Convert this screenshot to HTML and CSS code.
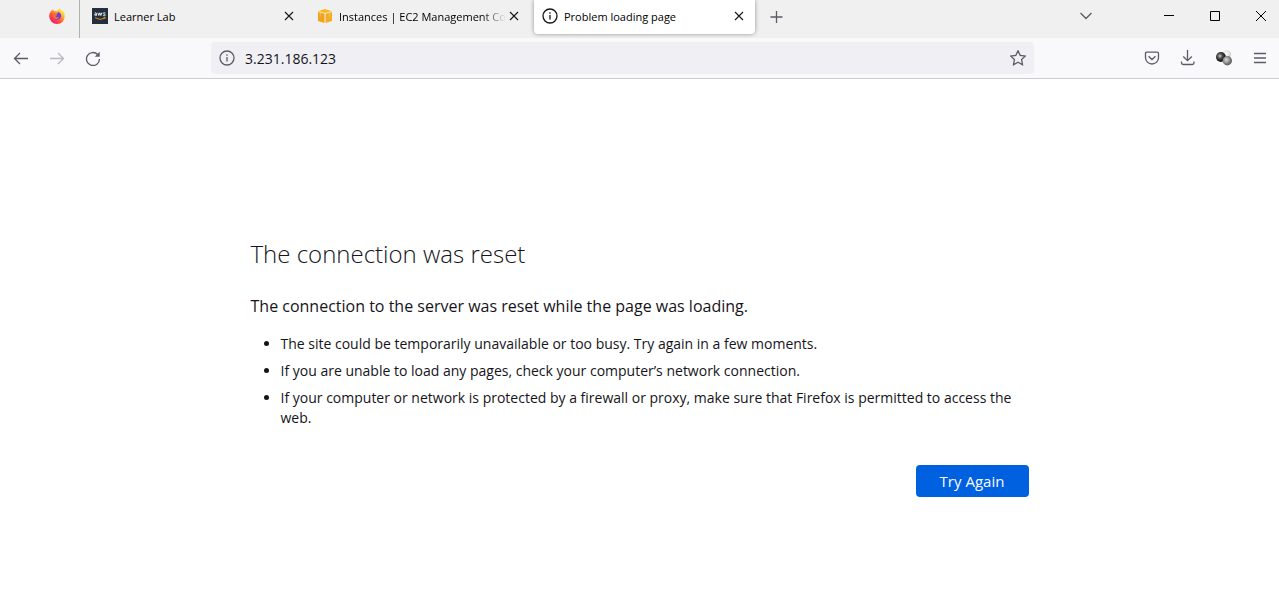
FILE: index.html
```html
<!DOCTYPE html>
<html lang="en">
<head>
<meta charset="utf-8">
<title>Problem loading page</title>
<link rel="stylesheet" href="styles.css">
</head>
<body>
<header class="browser">
  <div class="tabstrip">
    <button class="firefox-view" aria-label="Firefox View">
      <svg width="16" height="16" viewBox="0 0 16 16">
        <defs>
          <linearGradient id="flame" x1="0.85" y1="0.1" x2="0.2" y2="0.95"><stop offset="0" stop-color="#fff44f"/><stop offset="0.3" stop-color="#ffb02e"/><stop offset="0.6" stop-color="#ff5a36"/><stop offset="1" stop-color="#f0146e"/></linearGradient>
        </defs>
        <path d="M10.3.3c2 1 2.7 2.3 3 3.2.5 0 .6-.5.5-.9 1.300 1.500 2 3.300 2 5.500A7.800 7.800 0 0 1 .2 8.300C.2 5.900 1 4.300 1.900 3.200L2 2l1 1 .8-2 1.200 2h2c1 0 2.300-1 3.300-2.700z" fill="url(#flame)"/>
        <path d="M4.400 5.500 7.300 6l2.400-2c1.900.8 2.700 2.300 2.500 4.300-.3 2.300-2 3.500-4.100 3.500-2.400 0-4.300-1.800-4.300-4.100 0-.9.200-1.600.6-2.200z" fill="#7341d8"/>
        <path d="M3.500 5.200c1.400-.4 2.400 0 3 .9l1.900.3c-.2 1-1.200 1-1.900 1.600.3 1.300 2.400 1.700 3.700.7-.6 2-2.500 2.800-4.200 2.200C4.200 10.200 3.200 7.700 3.500 5.200z" fill="#ff6a30"/>
        <path d="M9.300 1.800c.4 2 3.400 3 3.700 6 .9-1.700.4-4.700-3.700-6z" fill="#ffd83d"/>
      </svg>
    </button>
    <nav class="tabs">
      <div class="tab">
        <svg class="tab-icon" width="16" height="16" viewBox="0 0 16 16"><rect width="16" height="16" fill="#232f3e"/><g fill="none" stroke="#e4e6e8" stroke-width="1"><path d="M2.700 5.100q1.800-.9 1.800.5V7.700M4.500 6.100q-2.200-.1-2 .9.400 1 2-.2M5.800 4.700l1 2.800 1-2.700 1 2.700 1-2.800M13.300 5q-2.200-.7-2.200.4c0 1 2.300.6 2.300 1.600 0 .9-1.500.8-2.500.4"/></g><path d="M3 9.600q5 3.300 9.700.7M11.500 9.500l1.800-.1-.5 1.600" fill="none" stroke="#d98e1c"/></svg>
        <a class="tab-title" href="#">Learner Lab</a>
        <button class="tab-close" aria-label="Close Learner Lab"><svg width="16" height="16" viewBox="0 0 16 16"><path d="M4 4l8 8M12 4l-8 8"/></svg></button>
      </div>
      <div class="tab">
        <svg class="tab-icon" width="16" height="16" viewBox="0 0 16 16"><path d="M1 3.300 7.800 1 15 3.300 8 5z" fill="#fbb817"/><path d="M1 4l6.500 1.700V15L1 12.900z" fill="#f0a31b"/><path d="M8.500 5.700 15 4v8.900L8.500 15z" fill="#f5ac24"/><path d="M3.500 3v1.500M12.300 3v1.500M3.200 4.700v4M12.800 4.700v4" stroke="#fbd277" stroke-width="0.700"/></svg>
        <a class="tab-title tab-title-faded" href="#">Instances | EC2 Management Co</a>
        <button class="tab-close" aria-label="Close Instances"><svg width="16" height="16" viewBox="0 0 16 16"><path d="M4 4l8 8M12 4l-8 8"/></svg></button>
      </div>
      <div class="tab tab-active">
        <svg class="tab-icon" width="16" height="16" viewBox="0 0 16 16"><circle cx="8" cy="8" r="7" fill="none" stroke="#15141a" stroke-width="1.300"/><path d="M8 7v4.500M8 4.300v1.400" stroke="#15141a" stroke-width="1.300"/></svg>
        <a class="tab-title" href="#" aria-current="page">Problem loading page</a>
        <button class="tab-close" aria-label="Close Problem loading page"><svg width="16" height="16" viewBox="0 0 16 16"><path d="M4 4l8 8M12 4l-8 8"/></svg></button>
      </div>
    </nav>
    <button class="new-tab" aria-label="New tab"><svg width="16" height="16" viewBox="0 0 16 16"><path d="M8.500 3v12M2.500 9h12"/></svg></button>
    <div class="window-controls">
      <button class="list-tabs" aria-label="List all tabs"><svg width="16" height="16" viewBox="0 0 16 16"><path d="M2.500 5 8 10.500 13.500 5"/></svg></button>
      <button class="window-button" aria-label="Minimize"><svg width="12" height="12" viewBox="0 0 12 12"><path d="M1 5.500h10"/></svg></button>
      <button class="window-button" aria-label="Maximize"><svg width="12" height="12" viewBox="0 0 12 12"><path d="M1.500 1.500h9v9h-9z"/></svg></button>
      <button class="window-button" aria-label="Close"><svg width="12" height="12" viewBox="0 0 12 12"><path d="M1 1l10 10M11 1 1 11"/></svg></button>
    </div>
  </div>
  <div class="toolbar">
    <div class="tool-group">
      <button class="tool" aria-label="Back"><svg width="16" height="16" viewBox="0 0 16 16"><path d="M15 8.500H1.500M7 3 1.500 8.500 7 14"/></svg></button>
      <button class="tool" aria-label="Forward" disabled><svg width="16" height="16" viewBox="0 0 16 16"><path d="M1 8.500h13.500M9 3 14.500 8.500 9 14"/></svg></button>
      <button class="tool" aria-label="Reload"><svg width="16" height="16" viewBox="0 0 16 16"><path d="M14.500 9A6.500 6.500 0 1 1 12.700 4.500"/><path d="M14.700 1.800v5H9.800z" class="solid"/></svg></button>
    </div>
    <div class="urlbar">
      <svg class="url-info" width="16" height="16" viewBox="0 0 16 16"><circle cx="8" cy="8" r="7"/><path d="M8 7v4.500M8 4.300v1.400"/></svg>
      <input class="url-input" type="text" value="3.231.186.123" aria-label="Address">
      <button class="bookmark" aria-label="Bookmark this page"><svg width="16" height="16" viewBox="0 0 16 16"><path d="M8 .8l2.200 4.600 5.100.7-3.700 3.500.9 5.100L8 12.300l-4.500 2.400.9-5.100L.7 6.100l5.100-.7z"/></svg></button>
    </div>
    <div class="tool-group">
      <button class="tool" aria-label="Save to Pocket"><svg width="16" height="16" viewBox="0 0 16 16"><path d="M2.800 2.200h10.400q1.300 0 1.300 1.300V7.500a6.500 6.500 0 0 1-13 0V3.500q0-1.300 1.300-1.300zM4.500 6.200 8 9.500l3.500-3.300"/></svg></button>
      <button class="tool" aria-label="Downloads"><svg width="16" height="16" viewBox="0 0 16 16"><path d="M7.500 0v10.500M3.200 6.500 7.500 10.700l4.300-4.200M1.500 11.500v1.300q0 1.700 1.700 1.700h9.100q1.700 0 1.700-1.700v-1.300"/></svg></button>
      <button class="tool" aria-label="Extension"><svg width="16" height="16" viewBox="0 0 16 16">
        <defs>
          <radialGradient id="dark" cx="0.4" cy="0.4"><stop offset="0" stop-color="#d0d0d0"/><stop offset="0.450" stop-color="#555555"/><stop offset="1" stop-color="#161616"/></radialGradient>
          <radialGradient id="grey" cx="0.4" cy="0.4"><stop offset="0" stop-color="#dddddd"/><stop offset="1" stop-color="#666666"/></radialGradient>
          <radialGradient id="pale" cx="0.4" cy="0.4"><stop offset="0" stop-color="#ffffff"/><stop offset="1" stop-color="#d4d4d4"/></radialGradient>
        </defs>
        <g class="spheres"><circle cx="11" cy="4.500" r="4.200" fill="url(#pale)"/><circle cx="4.900" cy="7" r="4.900" fill="url(#dark)"/><circle cx="11.300" cy="10.800" r="4.700" fill="url(#grey)"/></g>
      </svg></button>
      <button class="tool" aria-label="Open menu"><svg width="16" height="16" viewBox="0 0 16 16"><path d="M2 3.500h12M2 8h12M2 12.500h12"/></svg></button>
    </div>
  </div>
</header>
<main class="page">
  <h1 class="title">The connection was reset</h1>
  <p class="summary">The connection to the server was reset while the page was loading.</p>
  <ul class="hints">
    <li>The site could be temporarily unavailable or too busy. Try again in a few moments.</li>
    <li>If you are unable to load any pages, check your computer’s network connection.</li>
    <li>If your computer or network is protected by a firewall or proxy, make sure that Firefox is permitted to access the web.</li>
  </ul>
  <div class="actions"><button class="try-again">Try Again</button></div>
</main>
</body>
</html>
```
FILE: styles.css
```css
* { box-sizing: border-box; }

body {
  margin: 0;
  background: #ffffff;
  color: #15141a;
  font-family: "Open Sans", "Noto Sans", sans-serif;
}

button {
  display: flex;
  align-items: center;
  justify-content: center;
  padding: 0;
  border: 0;
  background: transparent;
  font-family: inherit;
}

button svg, .url-info {
  fill: none;
  stroke: #5b5b66;
  stroke-width: 1.3;
}

.tabstrip {
  display: flex;
  height: 38px;
  background: #f0f0f0;
}

.firefox-view {
  width: 80px;
  padding: 0 14px 6px 48px;
  border-right: 1px solid #b0b0b0;
}

.firefox-view svg { stroke: none; }

.tabs {
  display: flex;
  gap: 4px;
  padding-left: 4px;
}

.tab {
  display: flex;
  align-items: center;
  width: 221px;
  height: 34px;
  padding: 0 8px 2px;
  border-radius: 0 0 4px 4px;
}

.tab-active {
  background: #ffffff;
  box-shadow: 0 0 4px rgba(0, 0, 0, 0.4);
}

.tab-icon { flex: none; }

.tab-title {
  flex: 1;
  min-width: 0;
  margin-left: 6px;
  padding-top: 1px;
  overflow: hidden;
  color: #000000;
  font-size: 11px;
  line-height: 20px;
  text-decoration: none;
  white-space: nowrap;
}

.tab-title-faded { mask-image: linear-gradient(to left, transparent, #000000 24px); }

.tab-close svg {
  stroke: #15141a;
  stroke-width: 1.1;
}

.new-tab {
  width: 36px;
  height: 32px;
  margin-left: 3px;
}

.window-controls {
  display: flex;
  gap: 10px;
  height: 32px;
  margin-left: auto;
}

.list-tabs {
  width: 36px;
  margin-right: 37px;
}

.window-button { width: 36px; }

.window-button svg {
  stroke: #000000;
  stroke-width: 1;
}

.toolbar {
  display: flex;
  align-items: center;
  justify-content: space-between;
  gap: 100px;
  height: 41px;
  padding: 0 1px 0 3px;
  border-bottom: 1px solid #cccccf;
  background: #f9f9fb;
}

.tool-group { display: flex; }

.tool {
  width: 36px;
  height: 32px;
}

.tool:disabled { opacity: 0.4; }

.tool .solid {
  fill: #5b5b66;
  stroke: none;
}

.tool .spheres { stroke: none; }

.urlbar {
  display: flex;
  flex: 1;
  align-items: center;
  height: 32px;
  padding: 0 8px;
  border-radius: 4px;
  background: #f0f0f4;
}

.url-input {
  flex: 1;
  min-width: 0;
  margin: 0;
  padding: 0 10px;
  border: 0;
  outline: 0;
  background: transparent;
  color: #15141a;
  font-family: inherit;
  font-size: 14px;
}

.page {
  max-width: 778px;
  margin: 0 auto;
  padding-top: 155px;
}

.title {
  margin: 0;
  font-size: 24px;
  font-weight: 300;
  line-height: 40px;
}

.summary {
  margin: 20px 0 16px;
  font-size: 16px;
  line-height: 24px;
}

.hints {
  margin: 0;
  padding-left: 30px;
  font-size: 14px;
  line-height: 20px;
}

.hints li { margin-bottom: 7px; }

.actions {
  display: flex;
  justify-content: flex-end;
  margin-top: 37px;
}

.try-again {
  min-width: 113px;
  height: 32px;
  border-radius: 4px;
  background: #0061e0;
  color: #fbfbfe;
  font-size: 15px;
  font-weight: 500;
}
```
